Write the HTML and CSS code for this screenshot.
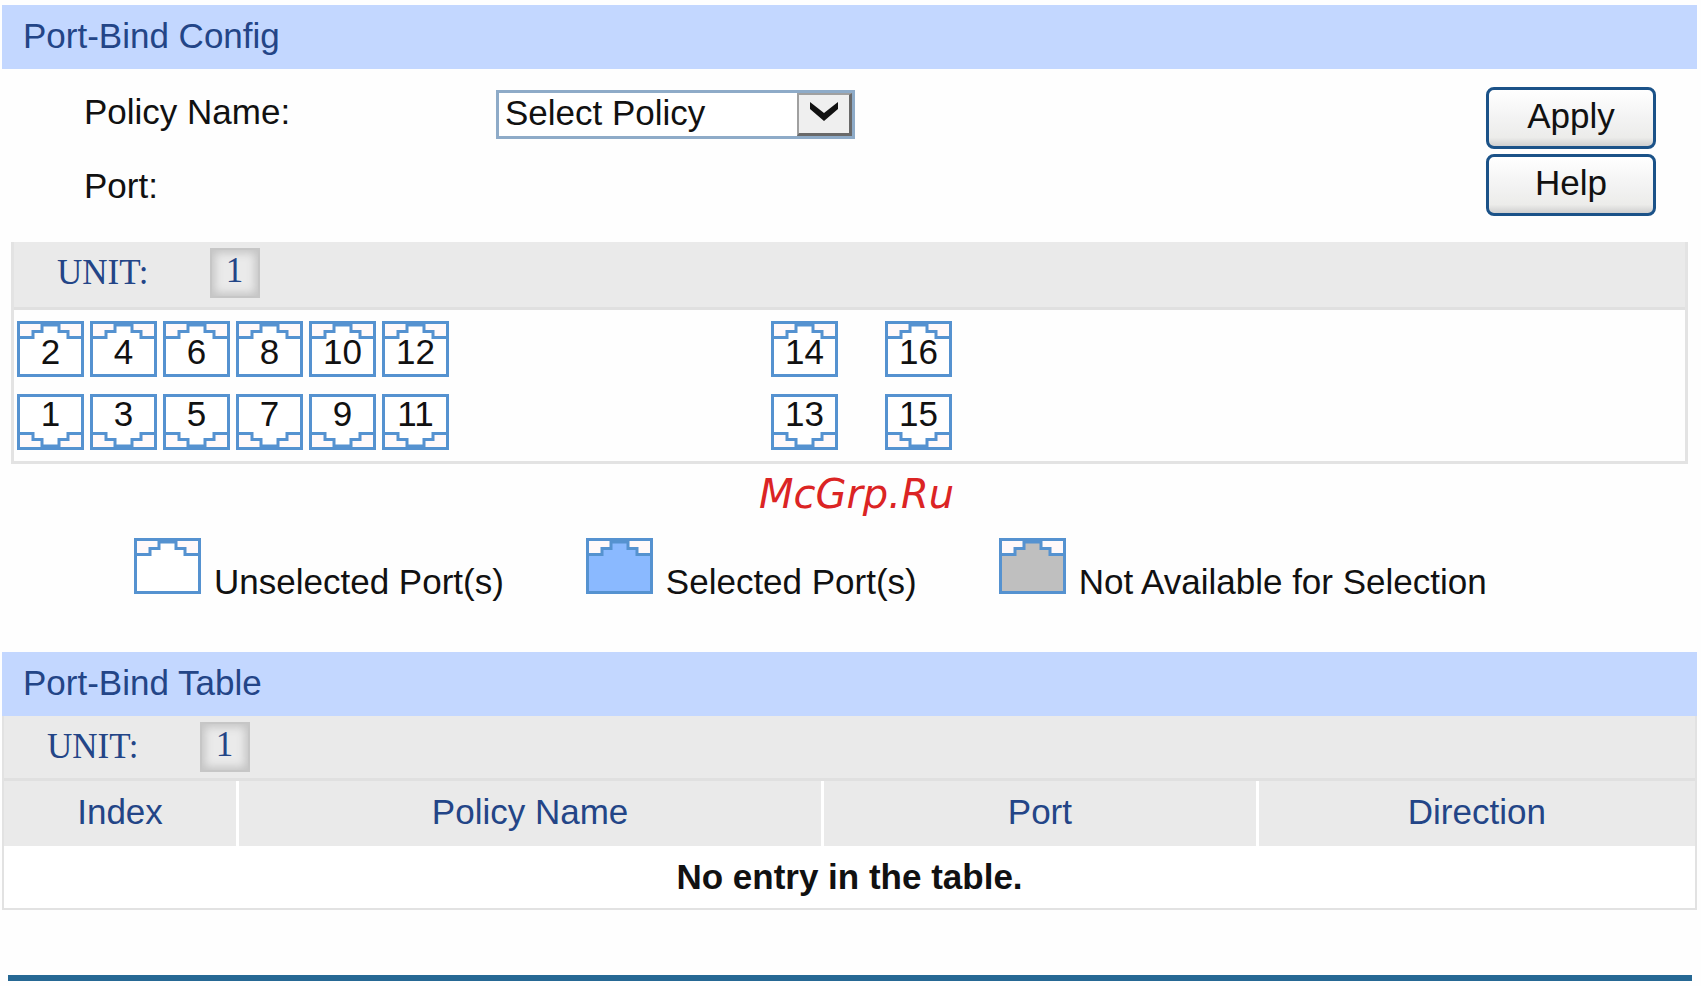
FILE: index.html
```html
<!DOCTYPE html>
<html lang="en">
<head>
    <meta charset="UTF-8">
    <meta name="viewport" content="width=device-width, initial-scale=1.0">
    <title>Port-Bind</title>
    <link rel="stylesheet" href="styles.css">
</head>
<body>
    <!-- Port socket shape, shared by the port buttons and the legend -->
    <svg class="defs" width="0" height="0" aria-hidden="true">
        <symbol id="socket" viewBox="0 0 67 56">
            <rect class="socket-body" x="1" y="1" width="65" height="54"/>
            <path class="socket-corner" d="M1 16H16V10H25V4V1H1ZM66 16H51V10H42V4V1H66Z"/>
            <path class="socket-line" d="M1 16.5H16V10.5H25V4H42V10.5H51V16.5H66"/>
            <rect class="socket-line" x="1.5" y="1.5" width="64" height="53"/>
        </symbol>
    </svg>

    <form class="config">
        <h2 class="title">Port-Bind Config</h2>

        <div class="config-row">
            <div class="fields">
                <div class="field">
                    <label for="policy">Policy Name:</label>
                    <div class="select-box">
                        <select id="policy" name="policy">
                            <option>Select Policy</option>
                        </select>
                        <span class="arrow">
                            <svg width="30" height="20" viewBox="0 0 30 20"><path d="M1 0L15 11L29 0V7L15 19L1 7Z"/></svg>
                        </span>
                    </div>
                </div>
                <div class="field">
                    <span class="label">Port:</span>
                </div>
            </div>
            <div class="actions">
                <button type="button" class="btn">Apply</button>
                <button type="button" class="btn">Help</button>
            </div>
        </div>

        <div class="panel">
            <div class="unit">
                <span>UNIT:</span>
                <button type="button" class="unit-btn">1</button>
            </div>
            <div class="ports">
                <div class="port-group">
                    <button type="button" class="port"><svg><use href="#socket"/></svg><span>2</span></button>
                    <button type="button" class="port"><svg><use href="#socket"/></svg><span>4</span></button>
                    <button type="button" class="port"><svg><use href="#socket"/></svg><span>6</span></button>
                    <button type="button" class="port"><svg><use href="#socket"/></svg><span>8</span></button>
                    <button type="button" class="port"><svg><use href="#socket"/></svg><span>10</span></button>
                    <button type="button" class="port"><svg><use href="#socket"/></svg><span>12</span></button>
                    <button type="button" class="port down"><svg><use href="#socket"/></svg><span>1</span></button>
                    <button type="button" class="port down"><svg><use href="#socket"/></svg><span>3</span></button>
                    <button type="button" class="port down"><svg><use href="#socket"/></svg><span>5</span></button>
                    <button type="button" class="port down"><svg><use href="#socket"/></svg><span>7</span></button>
                    <button type="button" class="port down"><svg><use href="#socket"/></svg><span>9</span></button>
                    <button type="button" class="port down"><svg><use href="#socket"/></svg><span>11</span></button>
                </div>
                <div class="port-group uplink">
                    <button type="button" class="port"><svg><use href="#socket"/></svg><span>14</span></button>
                    <button type="button" class="port"><svg><use href="#socket"/></svg><span>16</span></button>
                    <button type="button" class="port down"><svg><use href="#socket"/></svg><span>13</span></button>
                    <button type="button" class="port down"><svg><use href="#socket"/></svg><span>15</span></button>
                </div>
            </div>
        </div>

        <p class="mark">McGrp.Ru</p>

        <div class="legend">
            <div class="legend-item"><svg><use href="#socket"/></svg><span>Unselected Port(s)</span></div>
            <div class="legend-item selected"><svg><use href="#socket"/></svg><span>Selected Port(s)</span></div>
            <div class="legend-item disabled"><svg><use href="#socket"/></svg><span>Not Available for Selection</span></div>
        </div>
    </form>

    <section class="bindings">
        <h2 class="title">Port-Bind Table</h2>
        <div class="bindings-body">
            <div class="unit">
                <span>UNIT:</span>
                <button type="button" class="unit-btn">1</button>
            </div>
            <table>
                <colgroup>
                    <col class="col-index">
                    <col class="col-policy">
                    <col class="col-port">
                    <col class="col-direction">
                </colgroup>
                <thead>
                    <tr>
                        <th>Index</th>
                        <th>Policy Name</th>
                        <th>Port</th>
                        <th>Direction</th>
                    </tr>
                </thead>
                <tbody>
                    <tr>
                        <td colspan="4">No entry in the table.</td>
                    </tr>
                </tbody>
            </table>
        </div>
    </section>

    <hr>
</body>
</html>
```

FILE: styles.css
```css
* {
    box-sizing: border-box;
}

body {
    margin: 0;
    padding: 5px 4px 6px 2px;
    background-color: #fefefe;
    color: #111;
    font-family: "Liberation Sans", Arial, sans-serif;
    font-size: 35px;
    line-height: 40px;
}

button, select {
    font: inherit;
    color: inherit;
}

.defs {
    display: block;
}

.title {
    margin: 0;
    padding: 11px 21px 13px;
    background-color: #c3d7ff;
    color: #234587;
    font-size: 35px;
    font-weight: normal;
}

/* Policy form */
.config-row {
    display: flex;
    justify-content: space-between;
    padding: 18px 41px 26px 82px;
}

.fields {
    display: flex;
    flex-direction: column;
    gap: 20px;
}

.field {
    display: flex;
    align-items: center;
    height: 54px;
}

.field label, .field .label {
    width: 412px;
    padding-bottom: 4px;
}

.select-box {
    position: relative;
    width: 359px;
}

.select-box select {
    display: block;
    width: 100%;
    height: 49px;
    padding: 0 60px 4px 6px;
    border: 3px solid #8eabc8;
    border-radius: 0;
    background-color: #fff;
    appearance: none;
}

.arrow {
    position: absolute;
    top: 3px;
    right: 3px;
    bottom: 3px;
    display: flex;
    align-items: center;
    justify-content: center;
    width: 55px;
    padding-bottom: 4px;
    border: 2px solid #a0a0a0;
    border-right: 3px solid #696969;
    border-bottom: 3px solid #696969;
    background-color: #efefef;
    pointer-events: none;
}

.arrow path {
    fill: #111;
}

.actions {
    display: flex;
    flex-direction: column;
    gap: 5px;
}

.btn {
    width: 170px;
    height: 62px;
    padding: 0 0 4px;
    border: 3px solid #1b5288;
    border-radius: 8px;
    background: linear-gradient(#fff, #f3f3f3 50%, #ececea 85%, #cfcfcf);
}

/* Unit bar */
.unit {
    display: flex;
    align-items: center;
    gap: 61px;
    padding: 6px 43px;
    border-bottom: 3px solid #e0e0e0;
    background-color: #eaeaea;
    color: #234587;
    font-family: "Liberation Serif", "Times New Roman", serif;
}

.unit-btn {
    width: 50px;
    height: 50px;
    padding: 0 0 4px;
    border: 2px solid #c6c6c6;
    background-color: #eaeaea;
    box-shadow: inset 0 0 9px 3px #c4c4c4;
}

/* Port panel */
.panel {
    margin: 0 9px;
    border: 3px solid #e3e3e3;
    border-top: 0;
}

.panel .unit {
    padding-bottom: 9px;
}

.ports {
    display: flex;
    gap: 322px;
    padding: 11px 3px;
}

.port-group {
    display: grid;
    grid-template-columns: repeat(6, 67px);
    gap: 17px 6px;
}

.port-group.uplink {
    grid-template-columns: repeat(2, 67px);
    column-gap: 47px;
}

.port {
    display: grid;
    height: 56px;
    padding: 0;
    border: 0;
    background: none;
}

.port svg, .port span {
    grid-area: 1 / 1;
}

.port span {
    z-index: 1;
    padding-top: 11px;
}

.port.down span {
    padding-top: 0;
}

.port svg, .legend-item svg {
    width: 67px;
    height: 56px;
}

.port.down svg {
    transform: scaleY(-1);
}

.socket-body {
    fill: var(--port-fill, #fff);
}

.socket-corner {
    fill: #fff9fa;
}

.socket-line {
    fill: none;
    stroke: #5592d0;
    stroke-width: 3;
}

.mark {
    margin: 0;
    padding-left: 14px;
    color: #db2424;
    font-family: "DejaVu Sans", Verdana, sans-serif;
    font-size: 40px;
    font-style: italic;
    line-height: 61px;
    text-align: center;
}

/* Legend */
.legend {
    display: flex;
    gap: 82px;
    padding: 13px 0 50px 132px;
}

.legend-item {
    display: flex;
    align-items: baseline;
    gap: 13px;
}

.legend-item.selected {
    --port-fill: #8ab9ff;
}

.legend-item.disabled {
    --port-fill: #bfbfbf;
}

/* Binding table */
.bindings-body {
    border: 2px solid #e2e2e2;
    border-top: 0;
}

table {
    width: 100%;
    border-spacing: 0;
    table-layout: fixed;
}

.col-index {
    width: 13.9%;
}

.col-policy {
    width: 34.6%;
}

.col-port {
    width: 25.7%;
}

.col-direction {
    width: 25.8%;
}

th {
    padding: 11px 0 14px;
    border-right: 3px solid #fff;
    background-color: #eaeaea;
    color: #234587;
    font-weight: normal;
}

th:last-child {
    border-right: 0;
}

td {
    padding: 11px 0;
    background-color: #fff;
    font-weight: bold;
    text-align: center;
}

hr {
    height: 6px;
    margin: 65px 5px 0 6px;
    border: 0;
    background-color: #266894;
}
```
